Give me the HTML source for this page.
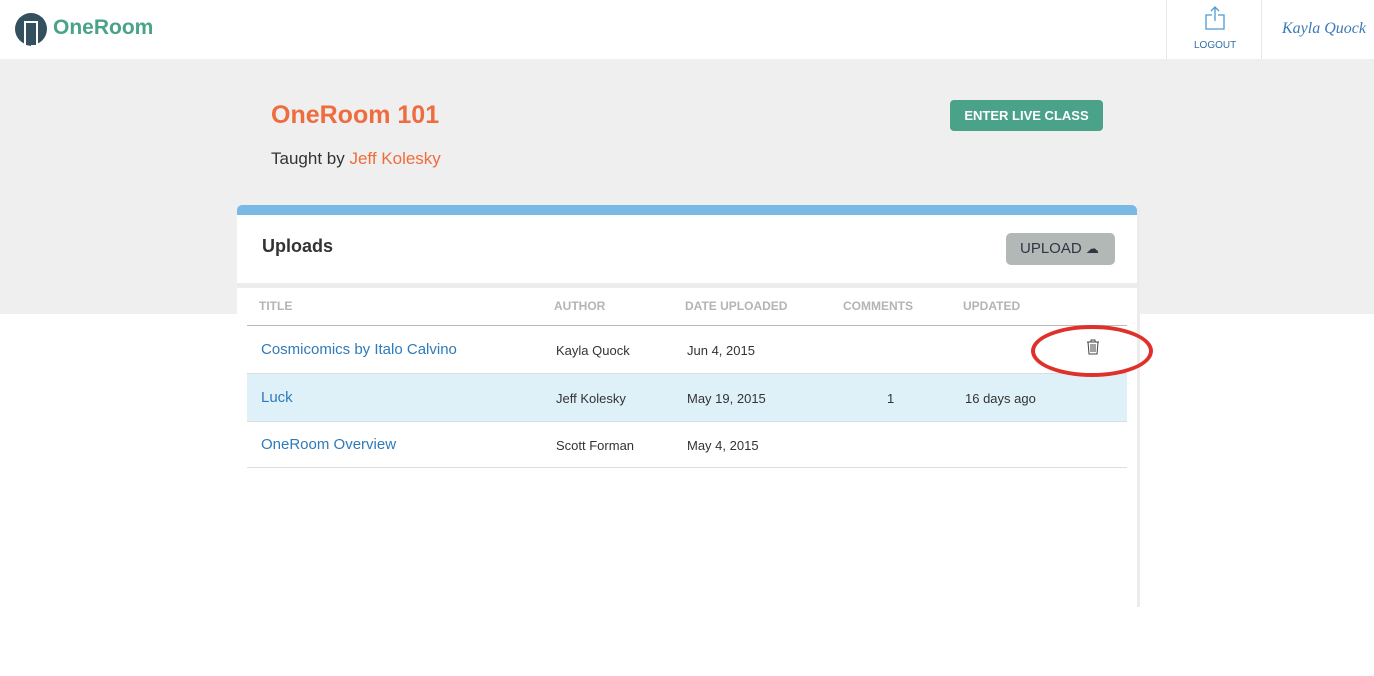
<!DOCTYPE html><html><head><style>
body{margin:0;width:1374px;height:676px;position:relative;background:#fff;font-family:"Liberation Sans",sans-serif;overflow:hidden}
.a{position:absolute}
.top{left:0;top:0;width:1374px;height:59px;background:#fff;border-bottom:1px solid #e4e4e4}
.band{left:0;top:59px;width:1374px;height:255px;background:#efefef}
.card{left:237px;top:205px;width:900px;height:402px;background:#fff;border-radius:5px 5px 0 0;border-right:3px solid #ececec}
.th{top:299px;font-size:12px;color:#b4b4b4;font-weight:bold}
.t{font-size:15px;color:#2f7ab8}
.s{font-size:13px;color:#333}
</style></head><body>
<div class="a top"></div>
<svg class="a" style="left:14px;top:12px" width="34" height="34"><circle cx="17" cy="17" r="16" fill="#33505f"/><rect x="10" y="9" width="14" height="24" fill="#fff"/><rect x="12" y="11" width="10" height="22" fill="#33505f"/><path d="M12 11 L17 13 L17 34 L12 33Z" fill="#33505f"/></svg>
<div class="a" style="left:53px;top:16px;font-size:21px;font-weight:bold;color:#4aa388">OneRoom</div>
<div class="a" style="left:1166px;top:0;width:1px;height:59px;background:#e6e6e6"></div>
<div class="a" style="left:1261px;top:0;width:1px;height:59px;background:#e6e6e6"></div>
<svg class="a" style="left:1204px;top:5px" width="22" height="26"><path d="M8 10H2V24H20V10H14M11 2V16M7 6L11 2L15 6" fill="none" stroke="#4b9bd8" stroke-width="1.3"/></svg>
<div class="a" style="left:1194px;top:40px;font-size:10px;color:#2f6fa8">LOGOUT</div>
<div class="a" style="left:1282px;top:20px;font-size:16px;font-style:italic;color:#3a7ab5;font-family:'Liberation Serif',serif">Kayla Quock</div>
<div class="a band"></div>
<div class="a" style="left:271px;top:101px;font-size:25px;font-weight:bold;color:#ef6c3e">OneRoom 101</div>
<div class="a" style="left:271px;top:149px;font-size:17px;color:#333">Taught by <span style="color:#ef6c3e">Jeff Kolesky</span></div>
<div class="a" style="left:950px;top:100px;width:153px;height:31px;background:#4aa388;border-radius:4px;color:#fff;font-size:13px;font-weight:bold;text-align:center;line-height:31px">ENTER LIVE CLASS</div>
<div class="a card"></div>
<div class="a" style="left:237px;top:205px;width:900px;height:10px;background:#79b9e4;border-radius:5px 5px 0 0"></div>
<div class="a" style="left:237px;top:283px;width:900px;height:5px;background:#ececec"></div>
<div class="a" style="left:262px;top:236px;font-size:18px;font-weight:bold;color:#333">Uploads</div>
<div class="a" style="left:1006px;top:233px;width:109px;height:32px;background:#b2b8b5;border-radius:5px;color:#334;font-size:15px;line-height:32px;padding-left:14px;box-sizing:border-box">UPLOAD <span style="font-size:13px">☁</span></div>
<div class="a th" style="left:259px">TITLE</div><div class="a th" style="left:554px">AUTHOR</div><div class="a th" style="left:685px">DATE UPLOADED</div><div class="a th" style="left:843px">COMMENTS</div><div class="a th" style="left:963px">UPDATED</div>
<div class="a" style="left:247px;top:325px;width:880px;height:1px;background:#bbb"></div>
<div class="a" style="left:247px;top:373px;width:880px;height:47px;background:#dff1f8;border-top:1px solid #ddd;border-bottom:1px solid #ddd"></div>
<div class="a" style="left:247px;top:467px;width:880px;height:1px;background:#ddd"></div>
<div class="a t" style="left:261px;top:341px">Cosmicomics by Italo Calvino</div><div class="a s" style="left:556px;top:343px">Kayla Quock</div><div class="a s" style="left:687px;top:343px">Jun 4, 2015</div>
<div class="a t" style="left:261px;top:389px">Luck</div><div class="a s" style="left:556px;top:391px">Jeff Kolesky</div><div class="a s" style="left:687px;top:391px">May 19, 2015</div><div class="a s" style="left:887px;top:391px">1</div><div class="a s" style="left:965px;top:391px">16 days ago</div>
<div class="a t" style="left:261px;top:436px">OneRoom Overview</div><div class="a s" style="left:556px;top:438px">Scott Forman</div><div class="a s" style="left:687px;top:438px">May 4, 2015</div>
<svg class="a" style="left:1085px;top:339px" width="16" height="16"><path d="M2 3H14M6 3V1H10V3M3 3L4 15H12L13 3M6 5V13M8 5V13M10 5V13" fill="none" stroke="#444" stroke-width="1"/></svg>
<div class="a" style="left:1031px;top:325px;width:122px;height:52px;border:4px solid #e0302a;border-radius:50%;box-sizing:border-box"></div>
</body></html>
